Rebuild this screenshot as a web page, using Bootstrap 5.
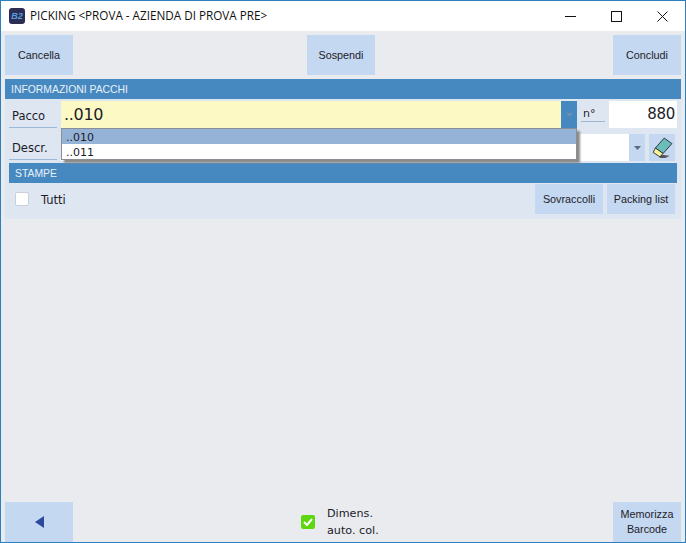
<!DOCTYPE html>
<html lang="it">
<head>
<meta charset="utf-8">
<title>Picking</title>
<link href="https://cdn.jsdelivr.net/npm/bootstrap@5.3.0/dist/css/bootstrap.min.css" rel="stylesheet">
<style>
html,body{margin:0;height:543px;overflow:hidden;background:#e9ebef}
body{font-family:"DejaVu Sans",sans-serif;color:#1c1c2a;font-size:11px}
.appwin{width:686px;height:543px;border:1px solid #2a80c0;background:#e9ebef}
.titlebar{height:30px;background:#fff;font-family:"Open Sans",sans-serif;font-size:11.7px;color:#111;padding-left:8px}
.logo{width:16px;height:16px;background:#2b2d52;border-radius:3px;color:#5aa0e0;font:italic bold 9px/16px "Liberation Sans",sans-serif;text-align:center;margin-right:5px}
.wctl{width:46px;height:30px}
.toolrow{padding:4px 4px 0;height:44px}
.tbtn{width:68px;height:40px;padding:0;border:0;border-radius:0;background:#c5d8f1;color:#1c1c2a;font-family:"Liberation Sans",sans-serif;font-size:10.8px;line-height:15px;--bs-btn-hover-bg:#c5d8f1}
.tbtn.shortb{height:30px}
.tbtn.midtool{margin-right:4px}
.bandtitle{height:20px;background:#4689c0;color:#e9f1f9;font-family:"Liberation Sans",sans-serif;font-size:10.4px;line-height:21px;padding-left:6px}
.mainpanel{margin:4px 4px 0;background:#dee6f1;position:relative;height:140px}
.frow{padding:2px 4px 0;height:33px}
.frow.rowtwo{height:31px}
.flabel{width:48px;margin-right:4px;height:21px;margin-top:6px;border-bottom:1px solid #9db8d6;padding-left:3px;font-size:11.5px;line-height:19px;font-family:"DejaVu Sans",sans-serif}
.rowtwo .flabel{margin-top:5px}
.pinput{height:27px;background:#fdf9c4;width:500px;font-size:16px;line-height:27px;padding-left:3px;font-family:"DejaVu Sans",sans-serif;letter-spacing:-.3px}
.arrowb{width:16px;height:27px;background:#4689c0}
.arrowb.lightb{background:#c5d8f1}
.nlabel{width:24px;margin:0 4px;height:21px;border-bottom:1px solid #9db8d6;font-size:11px;line-height:25px;padding-left:2px}
.numbox{width:68px;height:27px;background:#fff;text-align:right;font-size:15px;line-height:27px;padding-right:2px;font-family:"DejaVu Sans",sans-serif;letter-spacing:-.3px}
.dinput{height:27px;width:568px;background:#fff}
.erasebtn{width:26px;height:27px;background:#c5d8f1;margin-left:4px}
.ddlist{position:absolute;left:56px;top:49px;width:516px;height:32px;background:#fff;border:1px solid #8a8f96;box-shadow:3px 3px 2px #8a8a8a;font-size:11px;line-height:17px}
.ddsel{background:#95b3d7;height:15px;padding-left:4px}
.dditem{height:15px;padding-left:4px}
.stampeb{margin:0 4px}
.printrow{height:36px;padding:1px 6px 0 10px}
.cbox{width:14px;height:14px;margin-top:8px;background:#fff;border:1px solid #c9d0da;border-radius:2px}
.tutti{margin-left:12px;margin-top:8px;font-size:11.5px;line-height:16px}
.gapfill{height:283px}
.botrow{padding:0 4px;height:40px}
.autolabel{font-size:11.2px;line-height:17px;margin-left:12px;width:80px}
.gbox{width:14px;height:14px;background:#5fd60f;border-radius:2px}
.midb{width:175px;margin-left:228px;margin-right:auto}
</style>
</head>
<body>
<div class="appwin">
  <div class="titlebar d-flex align-items-center">
    <div class="logo">B2</div>
    <div class="flex-grow-1">PICKING &lt;PROVA - AZIENDA DI PROVA PRE&gt;</div>
    <div class="wctl d-flex align-items-center justify-content-center"><svg width="11" height="11"><path d="M0 5.5H11" stroke="#111"/></svg></div>
    <div class="wctl d-flex align-items-center justify-content-center"><svg width="11" height="11"><rect x=".5" y=".5" width="10" height="10" fill="none" stroke="#111"/></svg></div>
    <div class="wctl d-flex align-items-center justify-content-center"><svg width="11" height="11"><path d="M.5 .5L10.5 10.5M10.5 .5L.5 10.5" stroke="#111"/></svg></div>
  </div>
  <div class="toolrow d-flex justify-content-between">
    <button class="btn tbtn">Cancella</button>
    <button class="btn tbtn midtool">Sospendi</button>
    <button class="btn tbtn">Concludi</button>
  </div>
  <div class="mainpanel">
    <div class="bandtitle">INFORMAZIONI PACCHI</div>
    <div class="frow d-flex">
      <div class="flabel">Pacco</div>
      <div class="pinput">..010</div>
      <div class="arrowb d-flex align-items-center justify-content-center"><svg width="7" height="4"><path d="M0 0H7L3.5 4Z" fill="#6f8fae"/></svg></div>
      <div class="nlabel">n°</div>
      <div class="numbox">880</div>
    </div>
    <div class="frow rowtwo d-flex">
      <div class="flabel">Descr.</div>
      <div class="dinput"></div>
      <div class="arrowb lightb d-flex align-items-center justify-content-center"><svg width="7" height="4"><path d="M0 0H7L3.5 4Z" fill="#5a6a80"/></svg></div>
      <div class="erasebtn d-flex align-items-center justify-content-center">
        <svg width="22" height="22" viewBox="0 0 20 20"><path d="M7 16L17 17L13 19H8Z" fill="#555"/><path d="M12 1L19 6L11 15L4 10Z" fill="#6cbdb7" stroke="#223" stroke-width=".8"/><path d="M4 10L11 15L8 18L2 14Z" fill="#f6f29a" stroke="#223" stroke-width=".8"/></svg>
      </div>
    </div>
    <div class="bandtitle stampeb">STAMPE</div>
    <div class="printrow d-flex align-items-start">
      <div class="cbox"></div>
      <div class="tutti flex-grow-1">Tutti</div>
      <button class="btn tbtn shortb me-1">Sovraccolli</button>
      <button class="btn tbtn shortb">Packing list</button>
    </div>
    <div class="ddlist">
      <div class="ddsel">..010</div>
      <div class="dditem">..011</div>
    </div>
  </div>
  <div class="gapfill"></div>
  <div class="botrow d-flex align-items-center">
    <button class="btn tbtn d-flex align-items-center justify-content-center"><svg width="9" height="12"><path d="M9 0V12L0 6Z" fill="#2c4a9a"/></svg></button>
    <div class="midb d-flex align-items-center">
      <div class="gbox d-flex align-items-center justify-content-center"><svg width="10" height="8"><path d="M1 4L4 7L9 1" fill="none" stroke="#fff" stroke-width="2"/></svg></div>
      <div class="autolabel">Dimens.<br>auto. col.</div>
    </div>
    <button class="btn tbtn">Memorizza<br>Barcode</button>
  </div>
</div>
</body>
</html>
